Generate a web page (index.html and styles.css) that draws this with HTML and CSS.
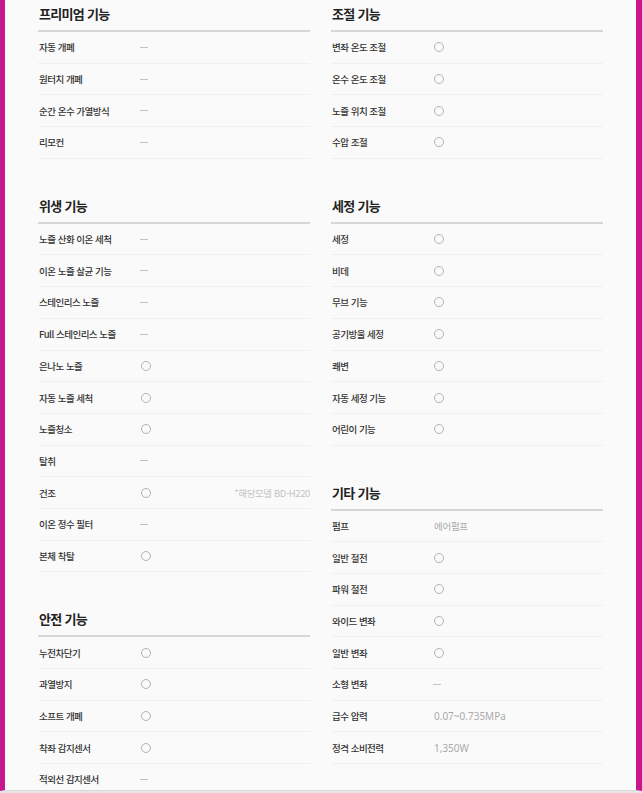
FILE: index.html
```html
<!DOCTYPE html>
<html lang="ko">
<head>
    <meta charset="UTF-8">
    <meta name="viewport" content="width=device-width, initial-scale=1.0">
    <title>제품 사양</title>
    <link rel="stylesheet" href="styles.css">
</head>
<body>
    <div class="page">
        <div class="spec-grid">
            <div class="spec-col">
                <section class="spec-section">
                    <h2>프리미엄 기능</h2>
                    <div class="row"><span class="label">자동 개폐</span><span class="dash"></span></div>
                    <div class="row"><span class="label">원터치 개폐</span><span class="dash"></span></div>
                    <div class="row"><span class="label">순간 온수 가열방식</span><span class="dash"></span></div>
                    <div class="row"><span class="label">리모컨</span><span class="dash"></span></div>
                </section>
                <section class="spec-section">
                    <h2>위생 기능</h2>
                    <div class="row"><span class="label">노즐 산화 이온 세척</span><span class="dash"></span></div>
                    <div class="row"><span class="label">이온 노즐 살균 기능</span><span class="dash"></span></div>
                    <div class="row"><span class="label">스테인리스 노즐</span><span class="dash"></span></div>
                    <div class="row"><span class="label">Full 스테인리스 노즐</span><span class="dash"></span></div>
                    <div class="row"><span class="label">은나노 노즐</span><span class="circle"></span></div>
                    <div class="row"><span class="label">자동 노즐 세척</span><span class="circle"></span></div>
                    <div class="row"><span class="label">노즐청소</span><span class="circle"></span></div>
                    <div class="row"><span class="label">탈취</span><span class="dash"></span></div>
                    <div class="row"><span class="label">건조</span><span class="circle"></span><span class="note">*해당모델 BD-H220</span></div>
                    <div class="row"><span class="label">이온 정수 필터</span><span class="dash"></span></div>
                    <div class="row"><span class="label">본체 착탈</span><span class="circle"></span></div>
                </section>
                <section class="spec-section">
                    <h2>안전 기능</h2>
                    <div class="row"><span class="label">누전차단기</span><span class="circle"></span></div>
                    <div class="row"><span class="label">과열방지</span><span class="circle"></span></div>
                    <div class="row"><span class="label">소프트 개폐</span><span class="circle"></span></div>
                    <div class="row"><span class="label">착좌 감지센서</span><span class="circle"></span></div>
                    <div class="row"><span class="label">적외선 감지센서</span><span class="dash"></span></div>
                </section>
            </div>
            <div class="spec-col">
                <section class="spec-section">
                    <h2>조절 기능</h2>
                    <div class="row"><span class="label">변좌 온도 조절</span><span class="circle"></span></div>
                    <div class="row"><span class="label">온수 온도 조절</span><span class="circle"></span></div>
                    <div class="row"><span class="label">노즐 위치 조절</span><span class="circle"></span></div>
                    <div class="row"><span class="label">수압 조절</span><span class="circle"></span></div>
                </section>
                <section class="spec-section">
                    <h2>세정 기능</h2>
                    <div class="row"><span class="label">세정</span><span class="circle"></span></div>
                    <div class="row"><span class="label">비데</span><span class="circle"></span></div>
                    <div class="row"><span class="label">무브 기능</span><span class="circle"></span></div>
                    <div class="row"><span class="label">공기방울 세정</span><span class="circle"></span></div>
                    <div class="row"><span class="label">쾌변</span><span class="circle"></span></div>
                    <div class="row"><span class="label">자동 세정 기능</span><span class="circle"></span></div>
                    <div class="row"><span class="label">어린이 기능</span><span class="circle"></span></div>
                </section>
                <section class="spec-section">
                    <h2>기타 기능</h2>
                    <div class="row"><span class="label">펌프</span><span class="value">에어펌프</span></div>
                    <div class="row"><span class="label">일반 절전</span><span class="circle"></span></div>
                    <div class="row"><span class="label">파워 절전</span><span class="circle"></span></div>
                    <div class="row"><span class="label">와이드 변좌</span><span class="circle"></span></div>
                    <div class="row"><span class="label">일반 변좌</span><span class="circle"></span></div>
                    <div class="row"><span class="label">소형 변좌</span><span class="dash"></span></div>
                    <div class="row"><span class="label">급수 압력</span><span class="value num">0.07~0.735MPa</span></div>
                    <div class="row"><span class="label">정격 소비전력</span><span class="value num">1,350W</span></div>
                </section>
            </div>
        </div>
    </div>
</body>
</html>
```

FILE: styles.css
```css
body {
    margin: 0;
    background-color: #e6e6e6;
    font-family: "Noto Sans CJK KR", "Noto Sans", sans-serif;
    color: #333;
}
.page {
    height: 790px;
    overflow: hidden;
    background-color: #fafafa;
    border-left: 5px solid #c8168e;
    border-right: 6px solid #c8168e;
    border-bottom: 1px solid #d9d9d9;
    padding-left: 33px;
}
.spec-grid {
    display: grid;
    grid-template-columns: 272px 272px;
    column-gap: 21px;
}
.spec-section {
    margin-bottom: 33px;
}
.spec-section h2 {
    margin: 0;
    height: 30px;
    line-height: 28px;
    font-size: 13px;
    font-weight: 700;
    letter-spacing: -0.7px;
    color: #222;
    border-bottom: 2px solid #d6d6d6;
    padding-left: 1px;
}
.row {
    display: flex;
    align-items: center;
    height: 31.7px;
    box-sizing: border-box;
    border-bottom: 1px solid #f0f0f0;
    padding-left: 1px;
    font-size: 9.5px;
}
.label {
    width: 101px;
    flex-shrink: 0;
    font-weight: 500;
    letter-spacing: -0.5px;
    color: #333;
}
.dash {
    width: 8px;
    height: 1px;
    background-color: #c2c2c2;
}
.circle {
    width: 8px;
    height: 8px;
    border: 1px solid #b3b3b3;
    border-radius: 50%;
    margin-left: 1px;
}
.value {
    color: #aaa;
    font-size: 9.5px;
    letter-spacing: -0.3px;
    margin-left: 1px;
}
.value.num {
    font-family: "Noto Sans", "Noto Sans CJK KR", sans-serif;
    font-size: 10px;
    letter-spacing: 0;
}
.note {
    margin-left: auto;
    color: #c4c4c4;
    letter-spacing: -0.4px;
}
```
